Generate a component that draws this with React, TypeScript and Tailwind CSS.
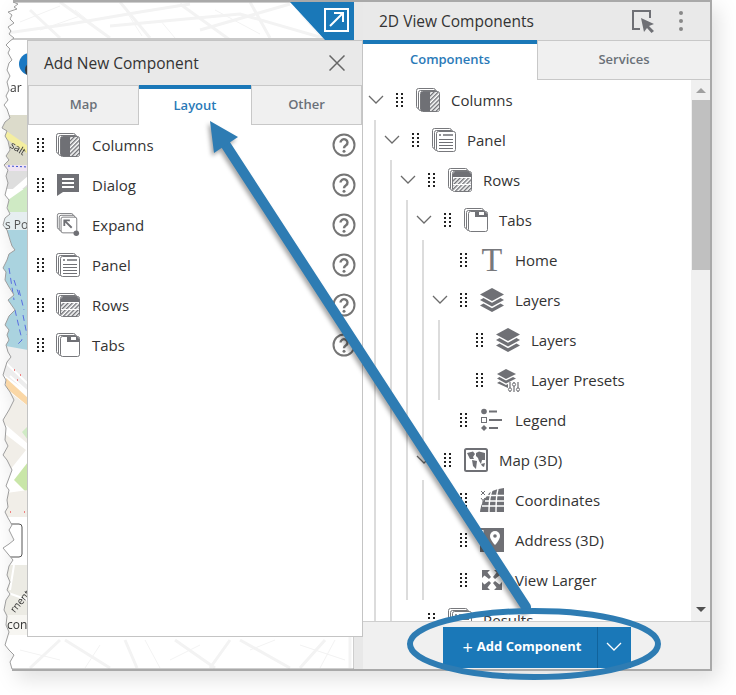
import type { ReactNode } from 'react'

const TORN =
  'M13 2 L18 4 L14 7 L17 9 L8 12 L12 15 L10 19 L14 23 L8 27 L11 31 L9 34 L14 38 L10 41 L6 45 L10 49 L8 53 L12 60 L9 63 L7 70 L10 76 L7 82 L9 90 L6 96 L8 100 L4 105 L7 109 L10 118 L5 122 L2 128 L7 131 L5 136 L8 141 L10 150 L6 156 L9 160 L4 165 L8 170 L6 176 L8 183 L5 195 L9 200 L7 208 L10 214 L5 218 L3 225 L7 230 L10 240 L12 246 L15 250 L9 254 L7 260 L3 268 L6 272 L5 280 L9 287 L14 295 L8 300 L15 310 L9 316 L5 325 L9 330 L7 335 L9 340 L6 345 L8 352 L11 357 L7 362 L3 375 L6 380 L5 385 L10 392 L14 400 L9 410 L3 420 L6 428 L5 440 L8 446 L3 455 L7 460 L12 470 L9 478 L6 486 L9 490 L7 500 L8 507 L5 512 L8 518 L12 525 L9 530 L14 540 L9 544 L3 548 L8 554 L13 560 L9 566 L7 575 L10 582 L7 590 L10 594 L6 600 L4 610 L7 616 L6 625 L9 632 L5 645 L9 650 L14 655 L10 662 L12 669 L354 669 L354 2 Z'

function MapBackdrop() {
  return (
    <svg viewBox="0 0 354 671" className="absolute inset-0 h-full w-full">
      <defs>
        <clipPath id="torn">
          <path d={TORN} />
        </clipPath>
      </defs>
      <path d={TORN} fill="#fff" />
      <g clipPath="url(#torn)">
        <g stroke="#f3f3f3" fill="none" strokeWidth="2">
          <path d="M0 34 L70 24 L140 12 L190 4 M60 2 L110 38 M30 10 L60 38 M120 2 L150 38 M110 26 L240 14 L330 40 M180 4 L230 40 M200 30 L290 4 M250 2 L270 38" strokeWidth="3" />
          <path d="M20 22 L60 6 M75 10 L100 30 M128 14 L142 36 M160 20 L175 38 M40 30 L80 16 M215 10 L260 34 M300 14 L320 36" strokeWidth="1" />
          <path d="M30 668 L60 640 M65 640 L110 668 M125 640 L137 668 M175 640 L215 668 M210 668 L230 640 M240 640 L290 668 M300 668 L325 640 M350 636 L350 668" strokeWidth="3" />
          <path d="M20 650 L60 660 M85 668 L100 645 M145 640 L160 668 M170 660 L200 645 M250 650 L275 640 M300 645 L345 660 M320 668 L335 640" strokeWidth="1" />
        </g>
        <rect x="0" y="38" width="354" height="2" fill="#c9c9c9" />
        <rect x="0" y="40" width="354" height="595" fill="#fff" />
        <rect x="0" y="115" width="28" height="52" fill="#dcdbcb" />
        <path d="M5 130 L28 146 L28 154 L5 138 Z" fill="#f4eea0" />
        <rect x="0" y="165" width="28" height="6" fill="#efe4f2" />
        <path d="M8 166 L28 167" stroke="#3a4fd0" strokeDasharray="2 2" />
        <rect x="0" y="171" width="28" height="18" fill="#dedede" />
        <path d="M0 200 L28 176 L28 184 L0 208 Z" fill="#fff" />
        <path d="M8 200 L28 186 L28 212 L8 212 Z" fill="#cfeac4" />
        <rect x="0" y="212" width="28" height="22" fill="#e6eef0" />
        <rect x="0" y="230" width="28" height="122" fill="#aad3df" />
        <path d="M9 268 L14 300 M14 280 L19 295 M19 290 L24 310 M15 310 L22 340 L16 346 M23 315 L27 335" stroke="#5a6ee0" strokeDasharray="6 4" fill="none" />
        <path d="M0 345 L28 350 L28 392 L0 372 Z" fill="#ededed" />
        <path d="M5 362 L28 384 M10 376 L28 392" stroke="#fff" strokeWidth="2" />
        <path d="M14 370 h1 M17 380 h1 M20 375 h1" stroke="#f08080" strokeWidth="2" />
        <path d="M6 378 L28 398 L28 406 L6 388 Z" fill="#fad7a6" />
        <path d="M0 385 L28 406 L28 446 L0 425 Z" fill="#f1eee8" />
        <path d="M0 420 L28 444 L28 452 L0 430 Z" fill="#fff" />
        <path d="M0 430 L26 450 L10 470 L0 470 Z" fill="#f1eee8" />
        <path d="M22 432 L28 426 L28 440 Z" fill="#cfeac4" />
        <path d="M10 476 L28 458 L28 462 L14 478 Z" fill="#fff" />
        <path d="M14 480 L28 462 L28 494 L22 488 Z" fill="#c9e6a8" />
        <path d="M0 494 L28 490 L28 517 L0 517 Z" fill="#f1eee8" />
        <path d="M10 512 h1 M24 512 h1" stroke="#f08080" strokeWidth="2" />
        <rect x="0" y="517" width="28" height="48" fill="#fff" />
        <rect x="-8" y="524" width="30" height="33" rx="3" fill="#fff" stroke="#555" />
        <rect x="0" y="565" width="28" height="50" fill="#ecebe4" />
        <path d="M14 565 L10 590 M0 590 L28 600" stroke="#fff" strokeWidth="2" />
        <rect x="0" y="615" width="28" height="20" fill="#f7f6f2" />
        <circle cx="30" cy="64" r="11" fill="#1a78c2" />
        <circle cx="34" cy="70" r="8" fill="#fff" stroke="#3a3a3a" strokeWidth="2" />
      </g>
      <path d={TORN} fill="none" stroke="#9d9d9d" />
      <rect x="13" y="0" width="341" height="2" fill="#a9a9a9" />
      <rect x="12" y="669" width="342" height="2" fill="#a9a9a9" />
      <path d="M290 2 L354 2 L354 40 L325 40 Z" fill="#1a78b8" />
      <rect x="325" y="9" width="23" height="22" fill="none" stroke="#fff" strokeWidth="2" />
      <path d="M330 26 L343 13 M334 13 L343 13 L343 22" fill="none" stroke="#fff" strokeWidth="2" />
    </svg>
  )
}

function MapLabels() {
  return (
    <div className="font-['Open_Sans',sans-serif] text-[12px] leading-none text-[#333]">
      <span className="absolute top-[82px] left-[10px]">ar</span>
      <span className="absolute top-[219px] left-[5px] text-[#555]">s Po</span>
      <span className="absolute top-[619px] left-[7px]">cont</span>
      <span className="absolute top-[143px] left-[10px] rotate-[32deg] text-[10px]">salt</span>
      <span className="absolute top-[596px] left-[7px] -rotate-[50deg] text-[10px]">rnent</span>
    </div>
  )
}

function Stack({ children }: { children: ReactNode }) {
  return (
    <svg viewBox="0 0 24 24" className="h-6 w-6 shrink-0" fill="none">
      <rect x="0.5" y="0.5" width="19" height="20" rx="2" stroke="#77787c" fill="#fff" />
      <rect x="2.5" y="2.5" width="19" height="20" rx="2" stroke="#77787c" fill="#fff" />
      <rect x="4.5" y="3.5" width="19" height="20" rx="2" stroke="#77787c" fill="#fff" />
      {children}
    </svg>
  )
}

const ColumnsIcon = () => (
  <Stack>
    <rect x="5" y="4" width="9" height="19" fill="#6f7075" />
    <rect x="14" y="4" width="9" height="19" fill="url(#hatch)" />
  </Stack>
)
const RowsIcon = () => (
  <Stack>
    <path d="M5 9 V6 a2 2 0 0 1 2-2 H21 a2 2 0 0 1 2 2 V9 Z" fill="#6f7075" />
    <rect x="5" y="10" width="18" height="6" fill="url(#hatch)" />
    <rect x="5" y="17" width="18" height="6" fill="url(#hatch)" />
  </Stack>
)
const PanelIcon = () => (
  <Stack>
    <path d="M7 7 h2 M11 7 h10" stroke="#6f7075" strokeWidth="1.6" />
    <path d="M7 11.5 H21 M7 14.5 H21 M7 17.5 H21 M7 20.5 H21" stroke="#6f7075" />
  </Stack>
)
const TabsIcon = () => (
  <Stack>
    <path d="M11 4 V9 H23 V6 a2 2 0 0 0-2-2 H20 V7 H15 V4 Z" fill="#6f7075" />
  </Stack>
)
const ExpandIcon = () => (
  <svg viewBox="0 0 24 26" className="h-6 w-6 shrink-0" fill="none">
    <rect x="0.5" y="0.5" width="17" height="17" rx="2" stroke="#77787c" fill="#fff" />
    <rect x="2.5" y="2.5" width="17" height="17" rx="2" stroke="#77787c" fill="#fff" />
    <rect x="4.5" y="4.5" width="17" height="17" rx="2" stroke="#77787c" fill="#fff" />
    <path d="M8 8 L16 16 M8 14 V8 H14" stroke="#6f7075" strokeWidth="2" />
    <circle cx="21" cy="22" r="3" fill="#6f7075" />
  </svg>
)
const DialogIcon = () => (
  <svg viewBox="0 0 24 24" className="h-6 w-6 shrink-0">
    <path d="M1 1 H23 V19 H7 L1 23 Z" fill="#6f7075" />
    <path d="M6 6 H18 M6 10 H18 M6 14 H18" stroke="#fff" strokeWidth="2" />
  </svg>
)
const LayersIcon = () => (
  <svg viewBox="0 0 24 24" className="h-6 w-6 shrink-0" fill="#6f7075">
    <path d="M12 0 L24 6.5 L12 13 L0 6.5 Z" />
    <path d="M3.5 10 L12 14.7 L20.5 10 L24 12 L12 18.5 L0 12 Z" />
    <path d="M3.5 15.5 L12 20.2 L20.5 15.5 L24 17.5 L12 24 L0 17.5 Z" />
  </svg>
)
const PresetsIcon = () => (
  <svg viewBox="0 0 24 24" className="h-6 w-6 shrink-0" fill="#6f7075">
    <path d="M10 1 L20 6 L10 11 L1 6 Z" />
    <path d="M3.5 9 L10 12.5 L17 9 L20 10.5 L10 15.5 L1 10.5 Z" />
    <path d="M3.5 13.5 L10 17 L12 16 V20 L1 15 Z" />
    <path d="M14 14 V24 M18 14 V24 M22 14 V24" stroke="#6f7075" strokeWidth="1.2" />
    <circle cx="14" cy="21.5" r="1.6" fill="#fff" stroke="#6f7075" />
    <circle cx="18" cy="16.5" r="1.6" fill="#fff" stroke="#6f7075" />
    <circle cx="22" cy="21.5" r="1.6" fill="#fff" stroke="#6f7075" />
  </svg>
)
const LegendIcon = () => (
  <svg viewBox="0 0 24 24" className="h-6 w-6 shrink-0" fill="#6f7075">
    <circle cx="4" cy="3.5" r="2.8" />
    <rect x="1.5" y="9.5" width="5" height="5" fill="#fff" stroke="#6f7075" />
    <path d="M4 17 L7 20 L4 23 L1 20 Z" />
    <path d="M9 3.5 H17 M9 12 H22 M9 20 H18" stroke="#6f7075" strokeWidth="2" />
  </svg>
)
const MapIcon = () => (
  <svg viewBox="0 0 24 24" className="h-6 w-6 shrink-0">
    <rect x="1" y="1" width="22" height="22" rx="1.5" fill="#fff" stroke="#6f7075" strokeWidth="2" />
    <path d="M3 5 L9 3.5 L11 6 L9 9 L10 11 L6 11 Z M8 12 L13 13 L12 21 L9 18 Z M12 5 L15 3.5 L21 5 L21 12 L18 12 L17 16 L15 13 L14 10 L12 8 Z M17 16 L21 15 L20 19 L18 18 Z" fill="#6f7075" />
  </svg>
)
const CoordsIcon = () => (
  <svg viewBox="0 0 24 24" className="h-6 w-6 shrink-0">
    <path d="M7 8 Q9 2 24 0 V24 H0 Q1 14 7 8 Z" fill="#6f7075" />
    <path d="M2 18 H24 M5 13 H24 M7 7.5 H24 M9 24 Q9 10 12 2 M16 24 Q16 8 18 1" stroke="#fff" strokeWidth="1.4" fill="none" />
    <path d="M1 3 L5 7 M5 3 L1 7 M1 10 L3 12.5 L5 10 M3 12.5 V15" stroke="#6f7075" fill="none" />
  </svg>
)
const AddressIcon = () => (
  <svg viewBox="0 0 24 24" className="h-6 w-6 shrink-0">
    <rect width="24" height="24" fill="#6f7075" />
    <path d="M15 3 a5 5 0 0 1 5 5 c0 4-5 9-5 9 s-5-5-5-9 a5 5 0 0 1 5-5 Z" fill="#fff" />
    <circle cx="15" cy="8" r="1.8" fill="#6f7075" />
    <rect x="2" y="2" width="1.5" height="8" fill="#fff" />
  </svg>
)
const LargerIcon = () => (
  <svg viewBox="0 0 24 24" className="h-6 w-6 shrink-0" fill="#6f7075">
    <path d="M2 2 H10 L7.5 4.5 L11 9 L9 11 L4.5 7.5 L2 10 Z" />
    <path d="M22 2 H14 L16.5 4.5 L13 9 L15 11 L19.5 7.5 L22 10 Z" />
    <path d="M2 22 H10 L7.5 19.5 L11 15 L9 13 L4.5 16.5 L2 14 Z" />
    <path d="M22 22 H14 L16.5 19.5 L13 15 L15 13 L19.5 16.5 L22 14 Z" />
  </svg>
)
const TextIcon = () => (
  <span className="flex h-6 w-6 shrink-0 items-center justify-center font-['Liberation_Serif',serif] text-[34px] leading-none text-[#77787c]">
    T
  </span>
)

function Grip() {
  return (
    <div className="grid w-[7px] shrink-0 grid-cols-2 gap-x-[3px] gap-y-[2px]">
      {Array.from({ length: 8 }).map((_, i) => (
        <span key={i} className="h-[2px] w-[2px] bg-[#222]" />
      ))}
    </div>
  )
}

function Help() {
  return (
    <svg viewBox="0 0 24 24" className="h-6 w-6 shrink-0" fill="none" stroke="#757575">
      <circle cx="12" cy="12" r="10.5" strokeWidth="2" />
      <path d="M8.5 9.5 a3.5 3.3 0 1 1 5.5 2.7 c-1.3 .9-2 1.6-2 3" strokeWidth="2.4" />
      <circle cx="12" cy="18.3" r="1.5" fill="#757575" stroke="none" />
    </svg>
  )
}

function Chevron({ color = '#6b6b6b' }: { color?: string }) {
  return (
    <svg viewBox="0 0 16 10" className="h-[10px] w-4" fill="none" stroke={color} strokeWidth="1.3">
      <path d="M1 1 L8 8 L15 1" />
    </svg>
  )
}

const addItems = [
  { label: 'Columns', icon: <ColumnsIcon /> },
  { label: 'Dialog', icon: <DialogIcon /> },
  { label: 'Expand', icon: <ExpandIcon /> },
  { label: 'Panel', icon: <PanelIcon /> },
  { label: 'Rows', icon: <RowsIcon /> },
  { label: 'Tabs', icon: <TabsIcon /> },
]

function AddDialog() {
  return (
    <div className="absolute top-[40px] left-[27px] flex h-[597px] w-[336px] flex-col border border-[#c4c4c4] bg-white">
      <div className="flex h-[44px] items-center justify-between bg-[#e9e9e9] pr-[17px] pl-[16px]">
        <span className="pt-[2px] text-[15.5px] font-medium text-[#333]">Add New Component</span>
        <svg viewBox="0 0 16 16" className="h-4 w-4" stroke="#666" strokeWidth="1.5">
          <path d="M0.5 0.5 L15.5 15.5 M15.5 0.5 L0.5 15.5" />
        </svg>
      </div>
      <div className="flex h-[40px] text-[13px] font-semibold">
        <div className="flex w-[111px] items-center justify-center border border-[#c8c8c8] bg-[#f0f0f0] text-[#6a7078]">Map</div>
        <div className="flex w-[112px] items-center justify-center border-t-4 border-[#1a78b8] pb-[3px] text-[#2a7ab8]">Layout</div>
        <div className="flex flex-1 items-center justify-center border border-[#c8c8c8] bg-[#f0f0f0] text-[#6a7078]">Other</div>
      </div>
      <div>
        {addItems.map((item) => (
          <div key={item.label} className="flex h-10 items-center pr-[6px] pl-[9px]">
            <Grip />
            <div className="ml-[12px]">{item.icon}</div>
            <span className="ml-[12px] flex-1 text-[15px] text-[#333]">{item.label}</span>
            <Help />
          </div>
        ))}
      </div>
    </div>
  )
}

type Node = { label: string; icon: ReactNode; open?: boolean; children?: Node[] }

const tree: Node[] = [
  {
    label: 'Columns',
    icon: <ColumnsIcon />,
    children: [
      {
        label: 'Panel',
        icon: <PanelIcon />,
        children: [
          {
            label: 'Rows',
            icon: <RowsIcon />,
            children: [
              {
                label: 'Tabs',
                icon: <TabsIcon />,
                children: [
                  { label: 'Home', icon: <TextIcon /> },
                  {
                    label: 'Layers',
                    icon: <LayersIcon />,
                    children: [
                      { label: 'Layers', icon: <LayersIcon /> },
                      { label: 'Layer Presets', icon: <PresetsIcon /> },
                    ],
                  },
                  { label: 'Legend', icon: <LegendIcon /> },
                ],
              },
              {
                label: 'Map (3D)',
                icon: <MapIcon />,
                children: [
                  { label: 'Coordinates', icon: <CoordsIcon /> },
                  { label: 'Address (3D)', icon: <AddressIcon /> },
                  { label: 'View Larger', icon: <LargerIcon /> },
                ],
              },
            ],
          },
          { label: 'Results', icon: <PanelIcon /> },
        ],
      },
    ],
  },
]

function TreeRow({ node }: { node: Node }) {
  return (
    <div>
      <div className="flex h-10 items-center">
        <div className="flex w-4 shrink-0 justify-center">{node.children && <Chevron />}</div>
        <div className="ml-3">
          <Grip />
        </div>
        <div className="ml-[13px]">{node.icon}</div>
        <span className="ml-[11px] text-[15px] whitespace-nowrap text-[#333]">{node.label}</span>
      </div>
      {node.children && (
        <div className="ml-1.5 border-l-2 border-[#dcdcdc] pl-2">
          {node.children.map((child) => (
            <TreeRow key={child.label} node={child} />
          ))}
        </div>
      )}
    </div>
  )
}

function ComponentsPanel() {
  return (
    <div className="flex w-[349px] flex-col border-t-2 border-r-2 border-b-2 border-[#a9a9a9] bg-white">
      <div className="flex h-[38px] items-center bg-[#e9e9e9] pr-[27px] pl-[16px]">
        <span className="flex-1 pt-[2px] text-[15.5px] font-medium text-[#333]">2D View Components</span>
        <svg viewBox="0 0 24 24" className="mr-[24px] h-6 w-6" fill="none">
          <path d="M19 9 V2 H2 V20 H9" stroke="#6f7075" strokeWidth="2" />
          <path d="M10 9 L23 15 L18 17 L23 22 L20.5 24 L16 19 L13 23 Z" fill="#6f7075" />
        </svg>
        <div className="flex flex-col gap-1">
          <span className="h-[4px] w-[4px] rounded-full bg-[#888]" />
          <span className="h-[4px] w-[4px] rounded-full bg-[#888]" />
          <span className="h-[4px] w-[4px] rounded-full bg-[#888]" />
        </div>
      </div>
      <div className="flex h-[40px] text-[13px] font-semibold">
        <div className="flex w-[174px] items-center justify-center border-t-4 border-[#1a78b8] pb-[4px] text-[#2a7ab8]">Components</div>
        <div className="flex flex-1 items-center justify-center border-t border-b border-l border-[#c8c8c8] bg-[#f0f0f0] text-[#6a7078]">Services</div>
      </div>
      <div className="flex min-h-0 flex-1">
        <div className="min-w-0 flex-1 overflow-hidden pl-[5px]">
          {tree.map((node) => (
            <TreeRow key={node.label} node={node} />
          ))}
        </div>
        <div className="flex w-[19px] shrink-0 flex-col bg-[#f0f0f0] pl-[1px]">
          <div className="flex h-5 items-center justify-center">
            <span className="h-0 w-0 border-x-[5px] border-b-[5px] border-x-transparent border-b-[#a0a0a0]" />
          </div>
          <div className="h-[170px] bg-[#c0c0c0]" />
          <div className="flex-1" />
          <div className="flex h-6 items-center justify-center">
            <span className="h-0 w-0 border-x-[5px] border-t-[5px] border-x-transparent border-t-[#505050]" />
          </div>
        </div>
      </div>
      <div className="flex h-[48px] shrink-0 items-center justify-center border-t border-[#cfcfcf] bg-[#f0f0f0]">
        <div className="mt-[3px] flex h-[41px] bg-[#1a78b8] text-white">
          <div className="flex w-[154px] items-center justify-center gap-[4px] pl-[5px] text-[13px] font-bold">
            <span className="text-[18px] leading-none font-normal">+</span>
            <span>Add Component</span>
          </div>
          <div className="flex w-[34px] items-center justify-center border-l border-[#11639c]">
            <Chevron color="#fff" />
          </div>
        </div>
      </div>
    </div>
  )
}

export default function App() {
  return (
    <div className="relative h-[695px] w-[736px] overflow-hidden bg-white font-['Open_Sans',sans-serif]">
      <svg className="absolute h-0 w-0">
        <defs>
          <pattern id="hatch" width="3" height="3" patternUnits="userSpaceOnUse" patternTransform="rotate(45)">
            <rect width="3" height="3" fill="#fff" />
            <rect width="1.4" height="3" fill="#6f7075" />
          </pattern>
        </defs>
      </svg>
      <div className="flex h-[671px] w-[712px] drop-shadow-[6px_8px_10px_rgba(0,0,0,0.12)]">
        <div className="relative w-[354px] shrink-0">
          <MapBackdrop />
          <MapLabels />
        </div>
        <div className="w-[9px] shrink-0 border-y-2 border-[#a9a9a9] bg-[#e8e8e8]" />
        <ComponentsPanel />
        <AddDialog />
      </div>
      {/* callout arrow and ring on top of everything */}
      <svg viewBox="0 0 736 695" className="pointer-events-none absolute inset-0 h-full w-full drop-shadow-[-2px_3px_2px_rgba(0,0,0,0.35)]">
        <path d="M220 136 L526 607" stroke="#2e7cb3" strokeWidth="10" strokeLinecap="round" />
        <path d="M210 121 L238 137 L214 153 Z" fill="#2e7cb3" />
      </svg>
      <svg viewBox="0 0 736 695" className="pointer-events-none absolute inset-0 h-full w-full">
        <ellipse cx="534" cy="644" rx="124" ry="33" fill="none" stroke="#2e7cb3" strokeWidth="6" />
      </svg>
    </div>
  )
}
